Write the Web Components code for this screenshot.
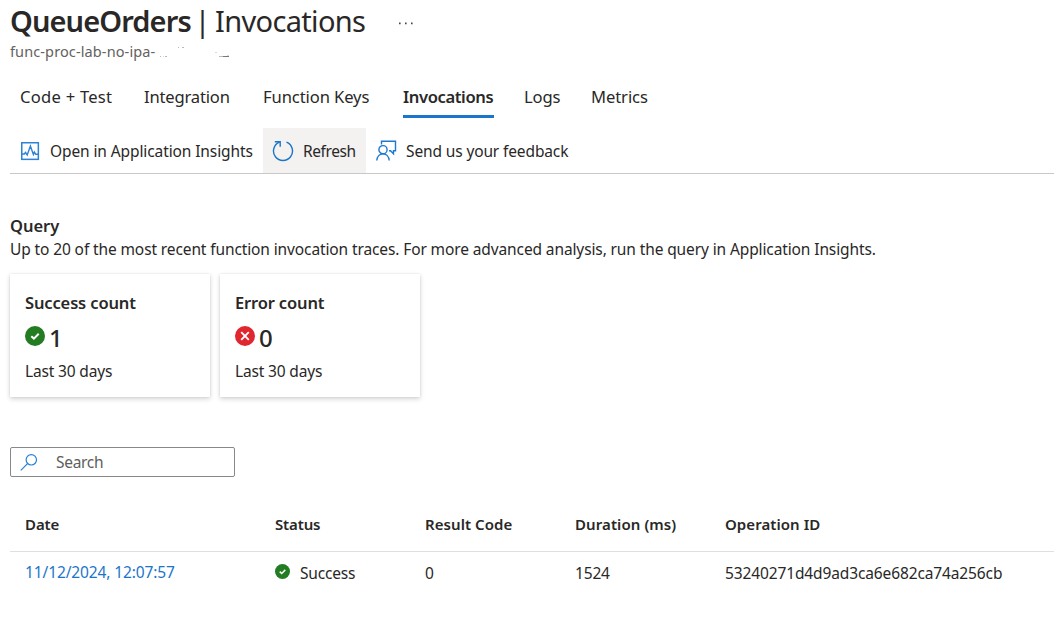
<!DOCTYPE html>
<html lang="en">
<head>
<meta charset="utf-8">
<title>QueueOrders | Invocations</title>
<style>
html,body{margin:0;background:#fff;height:624px;overflow:hidden}
body{font-family:"Noto Sans","Open Sans",sans-serif;color:#292827}
</style>
</head>
<body>
<invocations-page></invocations-page>
<script>
const define = (name, css, html, after) => customElements.define(name, class extends HTMLElement {
  connectedCallback() {
    if (this.shadowRoot) return;
    this.attachShadow({mode: 'open'}).innerHTML = `<style>*{box-sizing:border-box}${css}</style>${typeof html === 'function' ? html(this) : html}`;
    if (after) after(this, this.shadowRoot);
  }
});

// A single line of text: s = font size, w = line width, l = line height, b = weight.
define('ui-text', ':host{display:block;white-space:nowrap;flex:none}span{display:inline-block;vertical-align:top}', '<span><slot></slot></span>', (el, root) => {
  const a = n => el.getAttribute(n);
  el.style.fontSize = (a('s') || 15.5) + 'px';
  el.style.lineHeight = (a('l') || 20) + 'px';
  el.style.height = (a('l') || 20) + 'px';
  el.style.fontWeight = a('b') || 400;
  if (a('w')) {
    el.style.width = a('w') + 'px';
    const natural = root.querySelector('span').getBoundingClientRect().width;
    el.style.letterSpacing = ((a('w') - .7 - natural) / el.textContent.length).toFixed(3) + 'px';
  }
});

const icons = {
  insights: '<svg width="20" height="20" viewBox="0 0 20 20" fill="none" stroke="#2b83d6"><rect x="1.750" y="1.750" width="16.600" height="16.600" stroke-width="1.500"/><path d="M2 13h2.300l1.200-1.500 1.700 2.500L10.400 5l3 8.500 1-2.500 1.300 2.300H18" stroke-width="1.400"/></svg>',
  refresh: '<svg width="22" height="22" viewBox="0 0 22 22" fill="none" stroke="#1b75ca" stroke-width="1.400"><path d="M14.500 2.200A9.500 9.500 0 1 1 7.500 2.200"/><path d="M2.800 1.800h5.400v5"/></svg>',
  feedback: '<svg width="21" height="21" viewBox="0 0 21 21" fill="none" stroke="#1b79d0" stroke-width="1.400"><path d="M5.500 4.500V1.200h14v9.600h-2v3l-3-3h-1.500"/><circle cx="7" cy="9.700" r="4.100"/><path d="M.8 20.500c.3-4 2.800-6.700 6.200-6.700s5.900 2.700 6.200 6.700"/></svg>',
  search: '<svg width="18" height="18" viewBox="0 0 18 18" fill="none" stroke="#2680d4" stroke-width="1.200"><circle cx="11.300" cy="5.800" r="5.200"/><path d="M7.500 9.600.8 16.300"/></svg>',
  ok: '<svg width="100%" height="100%" viewBox="0 0 20 20"><circle cx="10" cy="10" r="10" fill="#237b22"/><path d="m6.300 10.200 2.600 2.400 4.800-4.800" fill="none" stroke="#fff" stroke-width="2"/></svg>',
  error: '<svg width="100%" height="100%" viewBox="0 0 20 20"><circle cx="10" cy="10" r="10" fill="#e0262f"/><path d="m6.200 6.200 7.600 7.600m0-7.600-7.600 7.600" fill="none" stroke="#fff" stroke-width="1.900"/></svg>',
  more: '<svg width="15" height="3" viewBox="0 0 15 3" fill="#484644"><path d="M0 .6h1.600v1.600H0zM6 .6h1.600v1.600H6zM12 .6h1.600v1.600H12z"/></svg>',
  remnant: '<svg width="74" height="12" viewBox="0 0 74 12" fill="#b9b8b7"><path d="M3 9h1v1H3zM8 9h2v1H8zM21 0h1v1h-1zM25 0h2v1h-2zM62 9h4v1h-4z"/><path d="M58 5h2v1h-2zM6 9h1v1H6zM70 8h2v1h-2z" opacity=".5"/><path d="M66 9h6v1h-6z" fill="#777"/></svg>'
};
define('ui-icon', ':host{display:block;flex:none}svg{display:block}', el => icons[el.getAttribute('name')]);

define('page-header', `:host{display:block;height:76px;padding:1px 0 0 10px}
.t{display:flex;height:40px}.bar{margin-left:3px}.inv{margin-left:4px}.more{margin:21px 0 0 33px}
.s{display:flex}.rem{margin:6px 0 0 1px}`,
`<div class="t"><ui-text s="29" l="40" w="181.5" b="600">QueueOrders</ui-text><ui-text class="bar" s="29" l="40" w="16.5">|</ui-text><ui-text class="inv" s="29" l="40" w="151">Invocations</ui-text><ui-icon class="more" name="more"></ui-icon></div>
<div class="s"><ui-text s="14.500" w="146" style="color:#646260">func-proc-lab-no-ipa-</ui-text><ui-icon class="rem" name="remnant"></ui-icon></div>`);

define('tab-item', ':host{display:block;box-sizing:border-box;height:31px}:host([active]){border-bottom:3px solid #1b75ca}', '<slot></slot>');
define('tab-bar', ':host{box-sizing:border-box;display:flex;height:52px;padding:11px 0 0 20px}', '<slot></slot>');

define('command-button', ':host{box-sizing:border-box;display:flex;align-items:flex-start;height:45px;padding:13px 0 0 10px}:host([hover]){background:#f3f2f1}ui-icon{width:30px}:host([icon=refresh]) ui-icon{margin:-1px 0 0 -1px;width:31px}:host([icon=feedback]) ui-icon{margin-top:-1px}', el => `<ui-icon name="${el.getAttribute('icon')}"></ui-icon><slot></slot>`);
define('command-bar', ':host{box-sizing:border-box;display:flex;height:46px;margin-left:10px;border-bottom:1px solid #c8c8c8}', '<slot></slot>');

define('count-card', `:host{box-sizing:border-box;display:block;width:200px;height:123px;padding:19px 15px 0;background:#fff;box-shadow:0 2px 5px rgba(0,0,0,.17),0 0 2px rgba(0,0,0,.1)}
.n{display:flex;height:42px;margin:4px 0 2px}.n ui-icon{width:20px;height:20px;margin-top:9px}.n ui-text{margin:6px 0 0 4px}`,
el => `<ui-text s="16.500" b="600" w="${el.getAttribute('tw')}">${el.getAttribute('label')}</ui-text>
<div class="n"><ui-icon name="${el.getAttribute('icon')}"></ui-icon><ui-text s="24" l="30" b="500">${el.getAttribute('value')}</ui-text></div><ui-text w="88">Last 30 days</ui-text>`);

define('search-box', ':host{box-sizing:border-box;display:flex;width:225px;height:30px;border:1px solid #8a8886;border-radius:2px;padding:4px 0 0 9px}ui-icon{width:36px;margin-top:2px}', '<ui-icon name="search"></ui-icon><ui-text w="48" style="color:#605e5c">Search</ui-text>');

define('data-row', ':host{box-sizing:border-box;display:grid;grid-template-columns:250px 150px 150px 150px 1fr;margin-left:10px;padding-left:15px;height:49px}:host([head]){height:54px;padding-top:16px;border-bottom:1px solid #e1dfdd}:host(:not([head])){padding-top:11px}', '<slot></slot>');
define('status-cell', ':host{display:flex}ui-icon{width:15px;height:15px;margin:1px 10px 0 0}', '<ui-icon name="ok"></ui-icon><slot></slot>');

define('invocations-page', `:host{display:flex;flex-direction:column;width:1054px;height:624px;background:#fff}page-header{box-sizing:border-box}
.q{padding:42px 0 0 10px}.desc{margin-top:3px}.cards{display:flex;gap:10px;margin-top:15px}
search-box{margin:50px 0 21px 10px}a{color:#1b75ca;text-decoration:none;margin-top:-1px}`,
`<page-header></page-header>
<tab-bar>
<tab-item style="width:124px"><ui-text s="16.600" w="93">Code + Test</ui-text></tab-item>
<tab-item style="width:119px"><ui-text s="16.600" w="86.500">Integration</ui-text></tab-item>
<tab-item style="width:140px"><ui-text s="16.600" w="107">Function Keys</ui-text></tab-item>
<tab-item active style="width:91px;margin-right:30px"><ui-text s="16.600" w="91" b="600">Invocations</ui-text></tab-item>
<tab-item style="width:67px"><ui-text s="16.600" w="37">Logs</ui-text></tab-item>
<tab-item><ui-text s="16.600" w="57.500">Metrics</ui-text></tab-item>
</tab-bar>
<command-bar>
<command-button icon="insights" style="width:253px"><ui-text w="203.500">Open in Application Insights</ui-text></command-button>
<command-button hover icon="refresh" style="width:103px"><ui-text w="53.500">Refresh</ui-text></command-button>
<command-button icon="feedback"><ui-text w="163">Send us your feedback</ui-text></command-button>
</command-bar>
<div class="q"><ui-text s="16.500" b="600" w="50">Query</ui-text>
<ui-text class="desc" w="866.500">Up to 20 of the most recent function invocation traces. For more advanced analysis, run the query in Application Insights.</ui-text>
<div class="cards"><count-card label="Success count" tw="111.500" icon="ok" value="1"></count-card><count-card label="Error count" tw="90" icon="error" value="0"></count-card></div></div>
<search-box></search-box>
<data-row head><ui-text s="15" b="600" w="35">Date</ui-text><ui-text s="15" b="600" w="46">Status</ui-text><ui-text s="15" b="600" w="88">Result Code</ui-text><ui-text s="15" b="600" w="102">Duration (ms)</ui-text><ui-text s="15" b="600" w="96">Operation ID</ui-text></data-row>
<data-row><a><ui-text w="150.500">11/12/2024, 12:07:57</ui-text></a><status-cell><ui-text w="56">Success</ui-text></status-cell><ui-text w="9.500">0</ui-text><ui-text w="35.500">1524</ui-text><ui-text w="278">53240271d4d9ad3ca6e682ca74a256cb</ui-text></data-row>`);
</script>
</body>
</html>
